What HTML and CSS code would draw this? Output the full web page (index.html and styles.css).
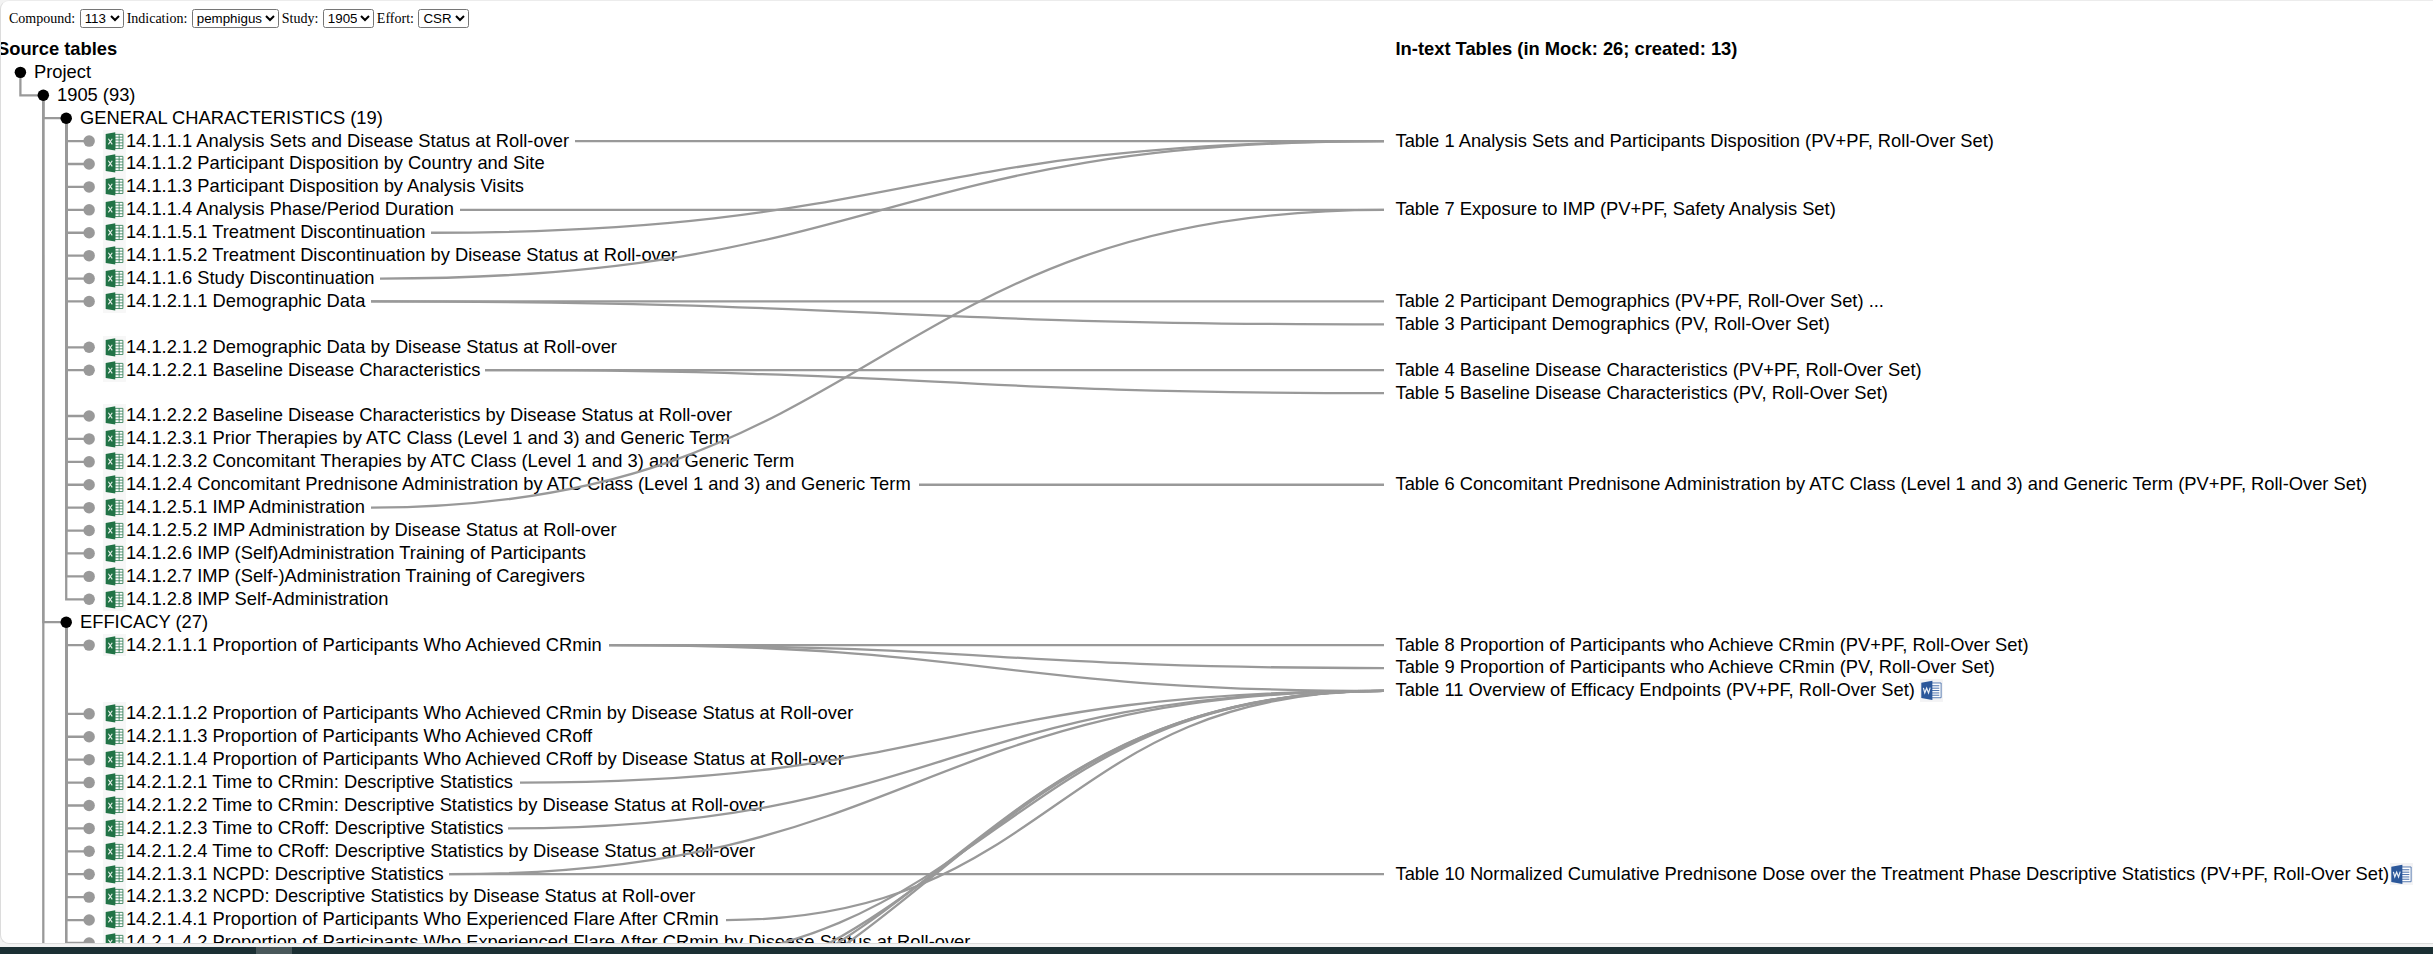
FILE: index.html
```html
<!DOCTYPE html>
<html lang="en">
<head>
<meta charset="utf-8">
<title>Source tables</title>
<link rel="stylesheet" href="styles.css">
</head>
<body>
<svg class="defs" width="0" height="0" aria-hidden="true">
  <symbol id="excel" viewBox="0 0 23 23">
    <rect width="23" height="23" fill="#f7f7f7"/>
    <path d="M12 4.4h8v14.2h-8z" fill="#fff" stroke="#3d8560" stroke-width=".9"/>
    <path d="M16.2 4.4v14.2M12 7.2h8M12 10h8M12 12.9h8M12 15.8h8" stroke="#3d8560" stroke-width=".9"/>
    <path d="M2.7 4L12.3 2.3v18.4L2.7 19z" fill="#217346"/>
    <path d="M5.4 8.8l3.9 5.6M9.3 8.8l-3.9 5.6" stroke="#e6f0ea" stroke-width="1.1" fill="none"/>
  </symbol>
  <symbol id="word" viewBox="0 0 23 23">
    <rect width="23" height="23" fill="#f3f3f5"/>
    <path d="M11.5 4h9.7v14.8h-9.7z" fill="#fff" stroke="#4a70ab" stroke-width=".9"/>
    <path d="M12 6.8h7.4M12 9.2h7.4M12 11.6h7.4M12 14h7.4M12 16.3h7.4" stroke="#4a70ab" stroke-width="1"/>
    <path d="M1.3 3.7L12.4 1.8v19.4L1.3 19.2z" fill="#2b579a"/>
    <path d="M3.4 8.9l1.4 5 1.9-4.7 1.9 4.8 1.6-5.3" stroke="#e8eef6" stroke-width="1.2" fill="none"/>
  </symbol>
</svg>
<main class="card">
  <form class="filters">
    <label>Compound:</label><select class="w-compound"><option>113</option></select>
    <label>Indication:</label><select class="w-indication"><option>pemphigus</option></select>
    <label>Study:</label><select class="w-study"><option>1905</option></select>
    <label>Effort:</label><select class="w-effort"><option>CSR</option></select>
  </form>
  <section class="chart">
    <div class="row head"><span class="source">Source tables</span><span class="target">In-text Tables (in Mock: 26; created: 13)</span></div>
    <div class="row l0"><span class="source">Project</span></div>
    <div class="row l1"><span class="source">1905 (93)</span></div>
    <div class="row l2"><span class="source">GENERAL CHARACTERISTICS (19)</span></div>
    <div class="row"><span class="source"><svg class="icon"><use href="#excel"/></svg>14.1.1.1 Analysis Sets and Disease Status at Roll-over</span><span class="target">Table 1 Analysis Sets and Participants Disposition (PV+PF, Roll-Over Set)</span></div>
    <div class="row"><span class="source"><svg class="icon"><use href="#excel"/></svg>14.1.1.2 Participant Disposition by Country and Site</span></div>
    <div class="row"><span class="source"><svg class="icon"><use href="#excel"/></svg>14.1.1.3 Participant Disposition by Analysis Visits</span></div>
    <div class="row"><span class="source"><svg class="icon"><use href="#excel"/></svg>14.1.1.4 Analysis Phase/Period Duration</span><span class="target">Table 7 Exposure to IMP (PV+PF, Safety Analysis Set)</span></div>
    <div class="row"><span class="source"><svg class="icon"><use href="#excel"/></svg>14.1.1.5.1 Treatment Discontinuation</span></div>
    <div class="row"><span class="source"><svg class="icon"><use href="#excel"/></svg>14.1.1.5.2 Treatment Discontinuation by Disease Status at Roll-over</span></div>
    <div class="row"><span class="source"><svg class="icon"><use href="#excel"/></svg>14.1.1.6 Study Discontinuation</span></div>
    <div class="row"><span class="source"><svg class="icon"><use href="#excel"/></svg>14.1.2.1.1 Demographic Data</span><span class="target">Table 2 Participant Demographics (PV+PF, Roll-Over Set) ...</span></div>
    <div class="row"><span class="source"></span><span class="target">Table 3 Participant Demographics (PV, Roll-Over Set)</span></div>
    <div class="row"><span class="source"><svg class="icon"><use href="#excel"/></svg>14.1.2.1.2 Demographic Data by Disease Status at Roll-over</span></div>
    <div class="row"><span class="source"><svg class="icon"><use href="#excel"/></svg>14.1.2.2.1 Baseline Disease Characteristics</span><span class="target">Table 4 Baseline Disease Characteristics (PV+PF, Roll-Over Set)</span></div>
    <div class="row"><span class="source"></span><span class="target">Table 5 Baseline Disease Characteristics (PV, Roll-Over Set)</span></div>
    <div class="row"><span class="source"><svg class="icon"><use href="#excel"/></svg>14.1.2.2.2 Baseline Disease Characteristics by Disease Status at Roll-over</span></div>
    <div class="row"><span class="source"><svg class="icon"><use href="#excel"/></svg>14.1.2.3.1 Prior Therapies by ATC Class (Level 1 and 3) and Generic Term</span></div>
    <div class="row"><span class="source"><svg class="icon"><use href="#excel"/></svg>14.1.2.3.2 Concomitant Therapies by ATC Class (Level 1 and 3) and Generic Term</span></div>
    <div class="row"><span class="source"><svg class="icon"><use href="#excel"/></svg>14.1.2.4 Concomitant Prednisone Administration by ATC Class (Level 1 and 3) and Generic Term</span><span class="target">Table 6 Concomitant Prednisone Administration by ATC Class (Level 1 and 3) and Generic Term (PV+PF, Roll-Over Set)</span></div>
    <div class="row"><span class="source"><svg class="icon"><use href="#excel"/></svg>14.1.2.5.1 IMP Administration</span></div>
    <div class="row"><span class="source"><svg class="icon"><use href="#excel"/></svg>14.1.2.5.2 IMP Administration by Disease Status at Roll-over</span></div>
    <div class="row"><span class="source"><svg class="icon"><use href="#excel"/></svg>14.1.2.6 IMP (Self)Administration Training of Participants</span></div>
    <div class="row"><span class="source"><svg class="icon"><use href="#excel"/></svg>14.1.2.7 IMP (Self-)Administration Training of Caregivers</span></div>
    <div class="row"><span class="source"><svg class="icon"><use href="#excel"/></svg>14.1.2.8 IMP Self-Administration</span></div>
    <div class="row l2"><span class="source">EFFICACY (27)</span></div>
    <div class="row"><span class="source"><svg class="icon"><use href="#excel"/></svg>14.2.1.1.1 Proportion of Participants Who Achieved CRmin</span><span class="target">Table 8 Proportion of Participants who Achieve CRmin (PV+PF, Roll-Over Set)</span></div>
    <div class="row"><span class="source"></span><span class="target">Table 9 Proportion of Participants who Achieve CRmin (PV, Roll-Over Set)</span></div>
    <div class="row"><span class="source"></span><span class="target">Table 11 Overview of Efficacy Endpoints (PV+PF, Roll-Over Set)<svg class="icon spaced"><use href="#word"/></svg></span></div>
    <div class="row"><span class="source"><svg class="icon"><use href="#excel"/></svg>14.2.1.1.2 Proportion of Participants Who Achieved CRmin by Disease Status at Roll-over</span></div>
    <div class="row"><span class="source"><svg class="icon"><use href="#excel"/></svg>14.2.1.1.3 Proportion of Participants Who Achieved CRoff</span></div>
    <div class="row"><span class="source"><svg class="icon"><use href="#excel"/></svg>14.2.1.1.4 Proportion of Participants Who Achieved CRoff by Disease Status at Roll-over</span></div>
    <div class="row"><span class="source"><svg class="icon"><use href="#excel"/></svg>14.2.1.2.1 Time to CRmin: Descriptive Statistics</span></div>
    <div class="row"><span class="source"><svg class="icon"><use href="#excel"/></svg>14.2.1.2.2 Time to CRmin: Descriptive Statistics by Disease Status at Roll-over</span></div>
    <div class="row"><span class="source"><svg class="icon"><use href="#excel"/></svg>14.2.1.2.3 Time to CRoff: Descriptive Statistics</span></div>
    <div class="row"><span class="source"><svg class="icon"><use href="#excel"/></svg>14.2.1.2.4 Time to CRoff: Descriptive Statistics by Disease Status at Roll-over</span></div>
    <div class="row"><span class="source"><svg class="icon"><use href="#excel"/></svg>14.2.1.3.1 NCPD: Descriptive Statistics</span><span class="target">Table 10 Normalized Cumulative Prednisone Dose over the Treatment Phase Descriptive Statistics (PV+PF, Roll-Over Set)<svg class="icon snug"><use href="#word"/></svg></span></div>
    <div class="row"><span class="source"><svg class="icon"><use href="#excel"/></svg>14.2.1.3.2 NCPD: Descriptive Statistics by Disease Status at Roll-over</span></div>
    <div class="row"><span class="source"><svg class="icon"><use href="#excel"/></svg>14.2.1.4.1 Proportion of Participants Who Experienced Flare After CRmin</span></div>
    <div class="row"><span class="source"><svg class="icon"><use href="#excel"/></svg>14.2.1.4.2 Proportion of Participants Who Experienced Flare After CRmin by Disease Status at Roll-over</span></div>
    <svg class="links" id="links" aria-hidden="true"></svg>
  </section>
</main>
<footer class="taskbar"><span class="active"></span></footer>
<script src="links.js"></script>
</body>
</html>
```

FILE: styles.css
```css
body {
  margin: 0;
  height: 954px;
  overflow: hidden;
  background: #f3f3f3;
  display: flex;
  flex-direction: column;
}
.defs { position: absolute; }
.card {
  box-sizing: border-box;
  height: 944px;
  overflow: hidden;
  position: relative;
  background: #fff;
  border: 1px solid #dcdcdc;
  border-top-color: #ececec;
  border-right: 0;
  border-radius: 9px 0 0 9px;
  margin-bottom: 3px;
}
.filters {
  display: flex;
  align-items: center;
  height: 19px;
  padding: 8px 0 0 8px;
  font: 14px "Liberation Serif", serif;
}
.filters label { margin-right: 4.5px; }
.filters select {
  box-sizing: border-box;
  height: 19px;
  margin-right: 3px;
  padding: 0;
  border: 1px solid #767676;
  border-radius: 2.5px;
  background: #fff;
  color: #000;
  font: 13.33px "Liberation Sans", sans-serif;
}
.w-compound { width: 44px; }
.w-indication { width: 87px; }
.w-study { width: 51px; }
.w-effort { width: 51px; }
.chart {
  position: relative;
  margin-top: 9.95px;
  font: 18.33px/22.91px "Liberation Sans", sans-serif;
  color: #000;
}
.row {
  display: flex;
  height: 22.91px;
  white-space: nowrap;
}
.source {
  box-sizing: border-box;
  display: flex;
  flex: none;
  width: 1394.5px;
  padding-left: 102px;
}
.target { display: flex; }
.head { font-weight: bold; }
.head .source { padding-left: 0; text-indent: -4px; }
.l0 .source { padding-left: 33px; }
.l1 .source { padding-left: 56px; }
.l2 .source { padding-left: 79px; }
.icon { flex: none; width: 22.91px; height: 22.91px; }
.spaced { margin-left: 5px; }
.snug { margin-left: 1px; }
.links {
  position: absolute;
  left: -1px;
  top: 0;
  width: 1400px;
  height: 910px;
  fill: none;
  stroke: #999;
  stroke-width: 2.29;
}
.links circle { stroke: none; fill: #999; }
.links .branch { fill: #000; }
.taskbar {
  flex: 1;
  display: flex;
  background: #1b2f33;
}
.active {
  width: 36px;
  margin-left: 256px;
  background: #49585b;
}
```

FILE: links.js
```js
const ROW = 22.91;
const END = 1384;
const svg = document.getElementById('links');
const rowY = r => (r + 1.5) * ROW;

function add(tag, attrs) {
  const el = document.createElementNS('http://www.w3.org/2000/svg', tag);
  for (const k in attrs) el.setAttribute(k, attrs[k]);
  svg.appendChild(el);
}

const depthX = d => 20.4 + d * ROW;
const leaves = [3, 4, 5, 6, 7, 8, 9, 10, 12, 13, 15, 16, 17, 18, 19, 20, 21, 22, 23,
  25, 28, 29, 30, 31, 32, 33, 34, 35, 36, 37, 38];

// Elbow guides: [parent depth, parent row, child row]
const elbows = [[0, 0, 1], [1, 1, 2], [1, 1, 24], [1, 1, 60], [2, 24, 60]];
for (const r of leaves) elbows.push([2, r < 24 ? 2 : 24, r]);
for (const [d, from, to] of elbows) {
  add('path', { d: `M${depthX(d)},${rowY(from)}V${rowY(to)}H${depthX(d + 1)}` });
}

for (const [d, r] of [[0, 0], [1, 1], [2, 2], [2, 24]]) {
  add('circle', { cx: depthX(d), cy: rowY(r), r: 5.73, class: 'branch' });
}
for (const r of leaves) add('circle', { cx: depthX(3), cy: rowY(r), r: 5.73 });

// Links: [start x, source row, target row]
const links = [
  [575, 3, 3], [460, 6, 6], [431, 7, 3], [380, 9, 3], [371, 10, 10], [371, 10, 11],
  [485, 13, 13], [485, 13, 14], [919, 18, 18], [371, 19, 6],
  [609, 25, 25], [609, 25, 26], [609, 25, 27],
  [520, 31, 27], [508, 33, 27], [449, 35, 27], [449, 35, 35], [726, 37, 27],
  [609, 39, 27], [543, 41, 27], [510, 42, 27], [487, 43, 27]
];
for (const [x, s, t] of links) {
  const m = (x + END) / 2;
  add('path', { d: `M${x},${rowY(s)}C${m},${rowY(s)} ${m},${rowY(t)} ${END},${rowY(t)}` });
}
```
